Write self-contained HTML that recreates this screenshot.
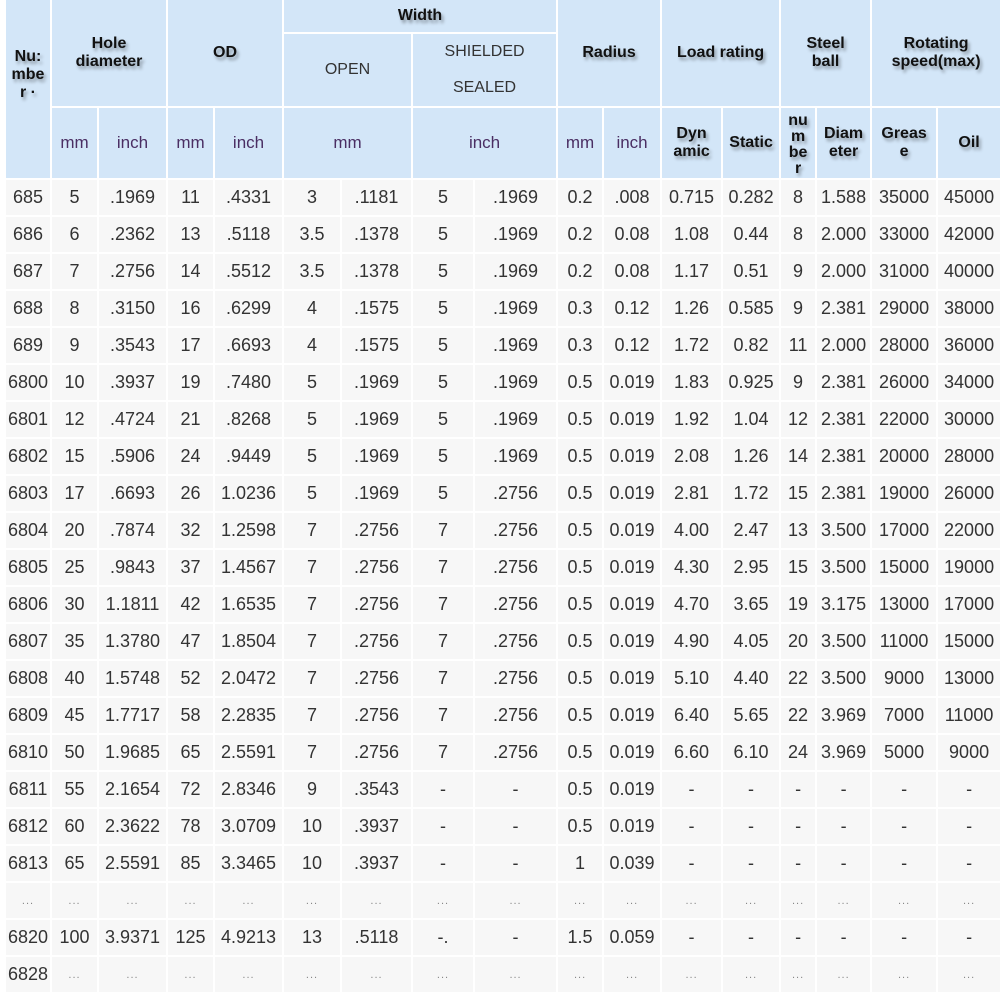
<!DOCTYPE html>
<html><head><meta charset="utf-8"><style>
html,body{margin:0;padding:0;background:#fff;width:1000px;height:991px;overflow:hidden}
table{position:absolute;left:4px;top:-2px;border-collapse:collapse;table-layout:fixed;width:998px;font-family:"Liberation Sans",Arial,sans-serif}
td{border:2px solid #fff;text-align:center;padding:0;color:#333;font-size:18px;overflow:hidden}
thead td{background:#d3e6f8;}
.h{font-weight:bold;font-size:16px;color:#111;text-shadow:2px 3px 3px rgba(0,0,0,0.35);line-height:18px}
.u{font-size:17px;color:#4a2e63}
.sh{font-size:16px;color:#333;line-height:36px}
tbody td{background:#f7f7f7;height:35px}
.e{font-size:11px;color:#888;letter-spacing:1px}
</style></head><body>
<table>
<colgroup>
<col style="width:46px"><col style="width:47px"><col style="width:69px"><col style="width:47px"><col style="width:69px">
<col style="width:58px"><col style="width:71px"><col style="width:62px"><col style="width:83px">
<col style="width:46px"><col style="width:58px"><col style="width:61px"><col style="width:58px"><col style="width:36px"><col style="width:55px"><col style="width:66px"><col style="width:64px">
</colgroup>
<thead>
<tr style="height:34px">
<td rowspan="3" class="h" style="vertical-align:top;padding-top:48px">Nu:<br>mbe<br>r ·</td>
<td rowspan="2" colspan="2" class="h">Hole<br>diameter</td>
<td rowspan="2" colspan="2" class="h">OD</td>
<td colspan="4" class="h">Width</td>
<td rowspan="2" colspan="2" class="h">Radius</td>
<td rowspan="2" colspan="2" class="h">Load rating</td>
<td rowspan="2" colspan="2" class="h">Steel<br>ball</td>
<td rowspan="2" colspan="2" class="h">Rotating<br>speed(max)</td>
</tr>
<tr style="height:72px">
<td colspan="2" class="u" style="color:#333;font-size:16px">OPEN</td>
<td colspan="2" class="sh">SHIELDED<br>SEALED</td>
</tr>
<tr style="height:72px">
<td class="u">mm</td><td class="u">inch</td><td class="u">mm</td><td class="u">inch</td>
<td colspan="2" class="u">mm</td><td colspan="2" class="u">inch</td>
<td class="u">mm</td><td class="u">inch</td>
<td class="h">Dyn<br>amic</td><td class="h">Static</td><td class="h" style="line-height:16px;padding-top:4px">nu<br>m<br>be<br>r</td><td class="h">Diam<br>eter</td><td class="h">Greas<br>e</td><td class="h">Oil</td>
</tr>
</thead>
<tbody>
<tr><td>685</td><td>5</td><td>.1969</td><td>11</td><td>.4331</td><td>3</td><td>.1181</td><td>5</td><td>.1969</td><td>0.2</td><td>.008</td><td>0.715</td><td>0.282</td><td>8</td><td>1.588</td><td>35000</td><td>45000</td></tr>
<tr><td>686</td><td>6</td><td>.2362</td><td>13</td><td>.5118</td><td>3.5</td><td>.1378</td><td>5</td><td>.1969</td><td>0.2</td><td>0.08</td><td>1.08</td><td>0.44</td><td>8</td><td>2.000</td><td>33000</td><td>42000</td></tr>
<tr><td>687</td><td>7</td><td>.2756</td><td>14</td><td>.5512</td><td>3.5</td><td>.1378</td><td>5</td><td>.1969</td><td>0.2</td><td>0.08</td><td>1.17</td><td>0.51</td><td>9</td><td>2.000</td><td>31000</td><td>40000</td></tr>
<tr><td>688</td><td>8</td><td>.3150</td><td>16</td><td>.6299</td><td>4</td><td>.1575</td><td>5</td><td>.1969</td><td>0.3</td><td>0.12</td><td>1.26</td><td>0.585</td><td>9</td><td>2.381</td><td>29000</td><td>38000</td></tr>
<tr><td>689</td><td>9</td><td>.3543</td><td>17</td><td>.6693</td><td>4</td><td>.1575</td><td>5</td><td>.1969</td><td>0.3</td><td>0.12</td><td>1.72</td><td>0.82</td><td>11</td><td>2.000</td><td>28000</td><td>36000</td></tr>
<tr><td>6800</td><td>10</td><td>.3937</td><td>19</td><td>.7480</td><td>5</td><td>.1969</td><td>5</td><td>.1969</td><td>0.5</td><td>0.019</td><td>1.83</td><td>0.925</td><td>9</td><td>2.381</td><td>26000</td><td>34000</td></tr>
<tr><td>6801</td><td>12</td><td>.4724</td><td>21</td><td>.8268</td><td>5</td><td>.1969</td><td>5</td><td>.1969</td><td>0.5</td><td>0.019</td><td>1.92</td><td>1.04</td><td>12</td><td>2.381</td><td>22000</td><td>30000</td></tr>
<tr><td>6802</td><td>15</td><td>.5906</td><td>24</td><td>.9449</td><td>5</td><td>.1969</td><td>5</td><td>.1969</td><td>0.5</td><td>0.019</td><td>2.08</td><td>1.26</td><td>14</td><td>2.381</td><td>20000</td><td>28000</td></tr>
<tr><td>6803</td><td>17</td><td>.6693</td><td>26</td><td>1.0236</td><td>5</td><td>.1969</td><td>5</td><td>.2756</td><td>0.5</td><td>0.019</td><td>2.81</td><td>1.72</td><td>15</td><td>2.381</td><td>19000</td><td>26000</td></tr>
<tr><td>6804</td><td>20</td><td>.7874</td><td>32</td><td>1.2598</td><td>7</td><td>.2756</td><td>7</td><td>.2756</td><td>0.5</td><td>0.019</td><td>4.00</td><td>2.47</td><td>13</td><td>3.500</td><td>17000</td><td>22000</td></tr>
<tr><td>6805</td><td>25</td><td>.9843</td><td>37</td><td>1.4567</td><td>7</td><td>.2756</td><td>7</td><td>.2756</td><td>0.5</td><td>0.019</td><td>4.30</td><td>2.95</td><td>15</td><td>3.500</td><td>15000</td><td>19000</td></tr>
<tr><td>6806</td><td>30</td><td>1.1811</td><td>42</td><td>1.6535</td><td>7</td><td>.2756</td><td>7</td><td>.2756</td><td>0.5</td><td>0.019</td><td>4.70</td><td>3.65</td><td>19</td><td>3.175</td><td>13000</td><td>17000</td></tr>
<tr><td>6807</td><td>35</td><td>1.3780</td><td>47</td><td>1.8504</td><td>7</td><td>.2756</td><td>7</td><td>.2756</td><td>0.5</td><td>0.019</td><td>4.90</td><td>4.05</td><td>20</td><td>3.500</td><td>11000</td><td>15000</td></tr>
<tr><td>6808</td><td>40</td><td>1.5748</td><td>52</td><td>2.0472</td><td>7</td><td>.2756</td><td>7</td><td>.2756</td><td>0.5</td><td>0.019</td><td>5.10</td><td>4.40</td><td>22</td><td>3.500</td><td>9000</td><td>13000</td></tr>
<tr><td>6809</td><td>45</td><td>1.7717</td><td>58</td><td>2.2835</td><td>7</td><td>.2756</td><td>7</td><td>.2756</td><td>0.5</td><td>0.019</td><td>6.40</td><td>5.65</td><td>22</td><td>3.969</td><td>7000</td><td>11000</td></tr>
<tr><td>6810</td><td>50</td><td>1.9685</td><td>65</td><td>2.5591</td><td>7</td><td>.2756</td><td>7</td><td>.2756</td><td>0.5</td><td>0.019</td><td>6.60</td><td>6.10</td><td>24</td><td>3.969</td><td>5000</td><td>9000</td></tr>
<tr><td>6811</td><td>55</td><td>2.1654</td><td>72</td><td>2.8346</td><td>9</td><td>.3543</td><td>-</td><td>-</td><td>0.5</td><td>0.019</td><td>-</td><td>-</td><td>-</td><td>-</td><td>-</td><td>-</td></tr>
<tr><td>6812</td><td>60</td><td>2.3622</td><td>78</td><td>3.0709</td><td>10</td><td>.3937</td><td>-</td><td>-</td><td>0.5</td><td>0.019</td><td>-</td><td>-</td><td>-</td><td>-</td><td>-</td><td>-</td></tr>
<tr><td>6813</td><td>65</td><td>2.5591</td><td>85</td><td>3.3465</td><td>10</td><td>.3937</td><td>-</td><td>-</td><td>1</td><td>0.039</td><td>-</td><td>-</td><td>-</td><td>-</td><td>-</td><td>-</td></tr>
<tr><td class="e">...</td><td class="e">...</td><td class="e">...</td><td class="e">...</td><td class="e">...</td><td class="e">...</td><td class="e">...</td><td class="e">...</td><td class="e">...</td><td class="e">...</td><td class="e">...</td><td class="e">...</td><td class="e">...</td><td class="e">...</td><td class="e">...</td><td class="e">...</td><td class="e">...</td></tr>
<tr><td>6820</td><td>100</td><td>3.9371</td><td>125</td><td>4.9213</td><td>13</td><td>.5118</td><td>-.</td><td>-</td><td>1.5</td><td>0.059</td><td>-</td><td>-</td><td>-</td><td>-</td><td>-</td><td>-</td></tr>
<tr><td>6828</td><td class="e">...</td><td class="e">...</td><td class="e">...</td><td class="e">...</td><td class="e">...</td><td class="e">...</td><td class="e">...</td><td class="e">...</td><td class="e">...</td><td class="e">...</td><td class="e">...</td><td class="e">...</td><td class="e">...</td><td class="e">...</td><td class="e">...</td><td class="e">...</td></tr>
</tbody>
</table>
</body></html>
